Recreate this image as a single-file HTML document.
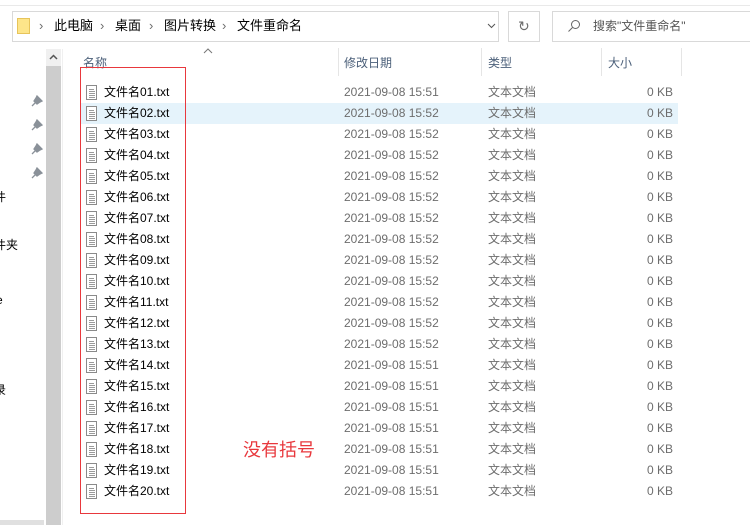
<!DOCTYPE html>
<html><head><meta charset="utf-8"><style>
*{margin:0;padding:0;box-sizing:border-box}
body{width:750px;height:525px;overflow:hidden;background:#fff;font-family:"Liberation Sans","Noto Sans CJK SC",sans-serif;font-size:12px;position:relative;color:#000}
.a{position:absolute;white-space:nowrap;line-height:16px}
.g{color:#6d6d6d}
.h{color:#4c607a}
.sep{position:absolute;top:48px;height:28px;width:1px;background:#e5e5e5}
.ic{position:absolute;width:11px;height:15px;border:1px solid #8a8a8a;background:#fff}
.ic i{position:absolute;left:2px;width:5px;height:1px;background:#9a9a9a}
.pin{position:absolute;width:10px;height:10px}
</style></head><body>
<div class="a" style="left:0;top:5px;width:750px;height:1px;background:#e9e9e9"></div>
<div class="a" style="left:12px;top:11px;width:487px;height:31px;border:1px solid #d9d9d9"></div>
<div class="a" style="left:17px;top:18px;width:13px;height:16px;background:#fde58a;border:1px solid #e7c45a"></div>
<div class="a g" style="left:39px;top:18px;font-size:13px">›</div>
<div class="a" style="left:54px;top:18px;font-size:13px">此电脑</div>
<div class="a g" style="left:100px;top:18px;font-size:13px">›</div>
<div class="a" style="left:115px;top:18px;font-size:13px">桌面</div>
<div class="a g" style="left:149px;top:18px;font-size:13px">›</div>
<div class="a" style="left:164px;top:18px;font-size:13px">图片转换</div>
<div class="a g" style="left:222px;top:18px;font-size:13px">›</div>
<div class="a" style="left:237px;top:18px;font-size:13px">文件重命名</div>
<svg class="a" style="left:487px;top:23px" width="9" height="6"><path d="M1 1 L4.5 4.5 L8 1" stroke="#555" fill="none"/></svg>
<div class="a" style="left:508px;top:11px;width:32px;height:31px;border:1px solid #d9d9d9"></div>
<div class="a g" style="left:518px;top:18px;font-size:14px">↻</div>
<div class="a" style="left:552px;top:11px;width:210px;height:31px;border:1px solid #d9d9d9"></div>
<svg class="a" style="left:567px;top:19px" width="14" height="14"><circle cx="8.5" cy="5.5" r="4" stroke="#666" fill="none"/><path d="M5.5 8.5 L1.5 12.5" stroke="#666"/></svg>
<div class="a" style="left:593px;top:18px;color:#555">搜索"文件重命名"</div>

<div class="a" style="left:46px;top:49px;width:15px;height:476px;background:#cdcdcd"></div>
<div class="a" style="left:46px;top:49px;width:15px;height:17px;background:#f0f0f0"></div>
<svg class="a" style="left:49px;top:54px" width="9" height="6"><path d="M1 5 L4.5 1.5 L8 5" stroke="#555" stroke-width="1.5" fill="none"/></svg>
<div class="a" style="left:62px;top:49px;width:1px;height:476px;background:#f0f0f0"></div>
<div class="a" style="left:0;top:520px;width:44px;height:5px;background:#e0e0e0"></div>
<svg class="a" style="left:31px;top:95px" width="12" height="12"><path d="M6 1 L11 6 L9 7 L6 9 L3 6 L5 3 Z M4.5 7.5 L1 11" stroke="#8a9199" fill="#8a9199" stroke-width="1.3"/></svg>
<svg class="a" style="left:31px;top:119px" width="12" height="12"><path d="M6 1 L11 6 L9 7 L6 9 L3 6 L5 3 Z M4.5 7.5 L1 11" stroke="#8a9199" fill="#8a9199" stroke-width="1.3"/></svg>
<svg class="a" style="left:31px;top:143px" width="12" height="12"><path d="M6 1 L11 6 L9 7 L6 9 L3 6 L5 3 Z M4.5 7.5 L1 11" stroke="#8a9199" fill="#8a9199" stroke-width="1.3"/></svg>
<svg class="a" style="left:31px;top:167px" width="12" height="12"><path d="M6 1 L11 6 L9 7 L6 9 L3 6 L5 3 Z M4.5 7.5 L1 11" stroke="#8a9199" fill="#8a9199" stroke-width="1.3"/></svg>
<div class="a" style="left:-6px;top:189px">件</div>
<div class="a" style="left:-6px;top:237px">件夹</div>
<div class="a" style="left:-4px;top:292px">e</div>
<div class="a" style="left:-6px;top:326px;color:#1a5fb4">t</div>
<div class="a" style="left:-6px;top:382px">录</div>

<svg class="a" style="left:203px;top:48px" width="10" height="6"><path d="M1 5 L5 1 L9 5" stroke="#777" fill="none"/></svg>
<div class="a h" style="left:83px;top:55px">名称</div>
<div class="a h" style="left:344px;top:55px">修改日期</div>
<div class="a h" style="left:488px;top:55px">类型</div>
<div class="a h" style="left:608px;top:55px">大小</div>
<div class="sep" style="left:338px"></div>
<div class="sep" style="left:481px"></div>
<div class="sep" style="left:601px"></div>
<div class="sep" style="left:681px"></div>
<div class="a" style="left:80px;top:103px;width:598px;height:21px;background:#e5f3fb"></div>
<div id="rows"></div>
<div class="a" style="left:80px;top:67px;width:106px;height:447px;border:1px solid #e8383d"></div>
<div class="a" style="left:243px;top:440px;color:#e8383d;font-size:18px;line-height:20px">没有括号</div>
<script>
var t=["15:51","15:52","15:52","15:52","15:52","15:52","15:52","15:52","15:52","15:52","15:52","15:52","15:52","15:51","15:51","15:51","15:51","15:51","15:51","15:51"];
var h="";
for(var i=0;i<20;i++){var y=84+i*21,n=(i<9?"0":"")+(i+1);
h+='<div class="ic" style="left:86px;top:'+(y+1)+'px"><i style="top:3px"></i><i style="top:5px;width:6px"></i><i style="top:7px;width:6px"></i><i style="top:9px;width:6px"></i><i style="top:11px;width:6px"></i></div>';
h+='<div class="a" style="left:104px;top:'+y+'px">文件名'+n+'.txt</div>';
h+='<div class="a g" style="left:344px;top:'+y+'px">2021-09-08 '+t[i]+'</div>';
h+='<div class="a g" style="left:488px;top:'+y+'px">文本文档</div>';
h+='<div class="a g" style="left:647px;top:'+y+'px">0 KB</div>';}
document.getElementById("rows").innerHTML=h;
</script>
</body></html>
